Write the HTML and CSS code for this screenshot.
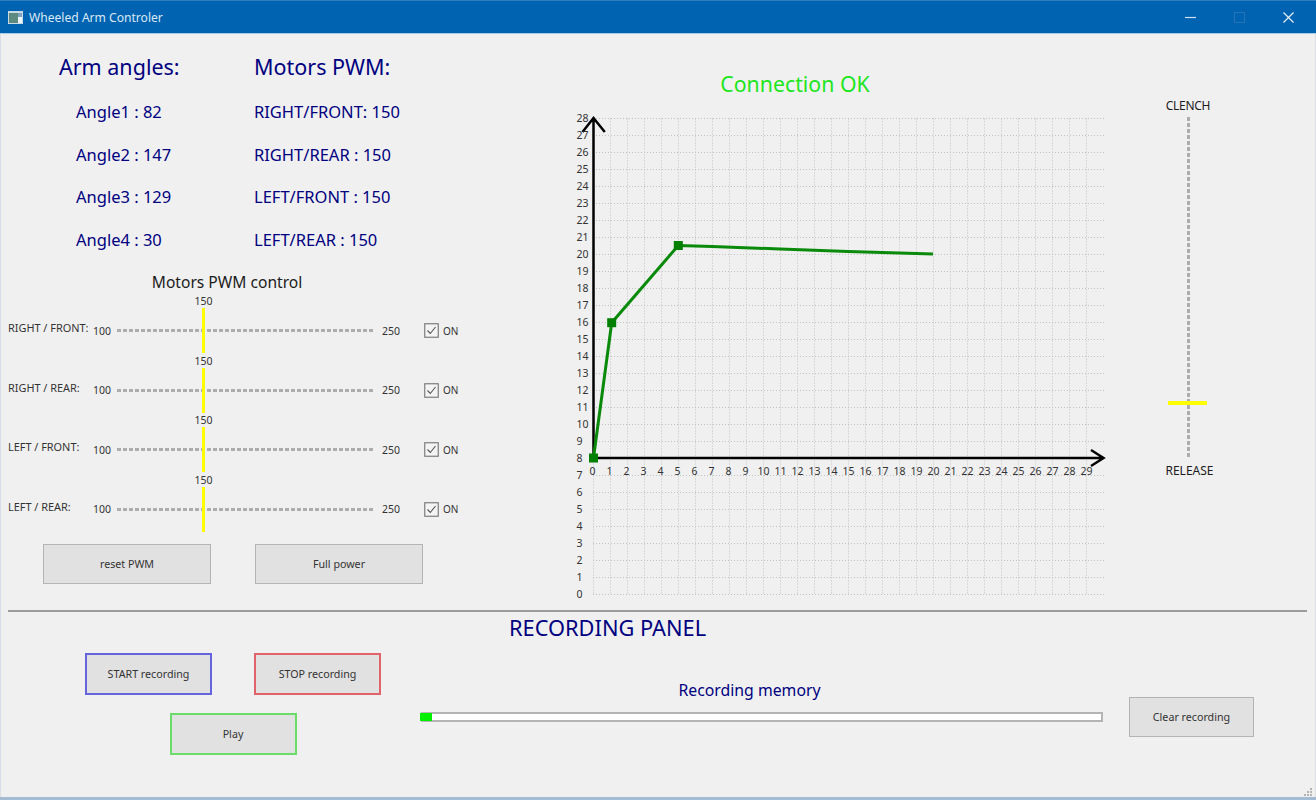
FILE: index.html
```html
<!DOCTYPE html>
<html lang="en">
<head>
<meta charset="utf-8">
<title>Wheeled Arm Controler</title>
<link rel="stylesheet" href="styles.css">
</head>
<body>
<div class="window">
  <header class="titlebar">
    <svg class="app-icon" width="15" height="13" viewBox="0 0 15 13"><rect width="15" height="13" fill="#c9d9e6"/><rect x="1" y="2" width="9" height="10" fill="#5c8a7f"/><rect x="10" y="2" width="4" height="4" fill="#7fa2bf"/><rect x="10" y="6" width="4" height="6" fill="#eef3f7"/></svg>
    <span class="title">Wheeled Arm Controler</span>
    <div class="win-controls">
      <svg width="11" height="11" viewBox="0 0 11 11"><path d="M0 5.500H11" stroke="#cfe2f3" stroke-width="1.200"/></svg>
      <svg class="win-max" width="11" height="11" viewBox="0 0 11 11"><rect x=".5" y=".5" width="10" height="10" fill="none" stroke="#2375b8"/></svg>
      <svg width="11" height="11" viewBox="0 0 11 11"><path d="M.5 .5L10.500 10.500M10.500 .5L.5 10.500" stroke="#e6f0f9" stroke-width="1.200"/></svg>
    </div>
  </header>

  <main class="top">
    <section class="left">
      <div class="readouts">
        <h2 class="heading">Arm angles:</h2>
        <h2 class="heading">Motors PWM:</h2>
        <div class="readout indent">Angle1 : 82</div>
        <div class="readout">RIGHT/FRONT: 150</div>
        <div class="readout indent">Angle2 : 147</div>
        <div class="readout">RIGHT/REAR : 150</div>
        <div class="readout indent">Angle3 : 129</div>
        <div class="readout">LEFT/FRONT : 150</div>
        <div class="readout indent">Angle4 : 30</div>
        <div class="readout">LEFT/REAR : 150</div>
      </div>
      <h3 class="control-title">Motors PWM control</h3>
      <div class="motor">
        <span class="motor-label">RIGHT / FRONT:</span><span class="val">100</span>
        <div class="h-slider"><span class="h-value">150</span><span class="h-handle"></span></div>
        <span class="val">250</span>
        <svg class="check" width="15" height="15" viewBox="0 0 15 15"><rect x=".75" y=".75" width="13.500" height="13.500" fill="#f4f4f4" stroke="#7d7d7d" stroke-width="1.200"/><path d="M3.500 7.500L6.300 10.500L11.500 4" fill="none" stroke="#555" stroke-width="1.100"/></svg>
        <span class="on">ON</span>
      </div>
      <div class="motor">
        <span class="motor-label">RIGHT / REAR:</span><span class="val">100</span>
        <div class="h-slider"><span class="h-value">150</span><span class="h-handle"></span></div>
        <span class="val">250</span>
        <svg class="check" width="15" height="15" viewBox="0 0 15 15"><rect x=".75" y=".75" width="13.500" height="13.500" fill="#f4f4f4" stroke="#7d7d7d" stroke-width="1.200"/><path d="M3.500 7.500L6.300 10.500L11.500 4" fill="none" stroke="#555" stroke-width="1.100"/></svg>
        <span class="on">ON</span>
      </div>
      <div class="motor">
        <span class="motor-label">LEFT / FRONT:</span><span class="val">100</span>
        <div class="h-slider"><span class="h-value">150</span><span class="h-handle"></span></div>
        <span class="val">250</span>
        <svg class="check" width="15" height="15" viewBox="0 0 15 15"><rect x=".75" y=".75" width="13.500" height="13.500" fill="#f4f4f4" stroke="#7d7d7d" stroke-width="1.200"/><path d="M3.500 7.500L6.300 10.500L11.500 4" fill="none" stroke="#555" stroke-width="1.100"/></svg>
        <span class="on">ON</span>
      </div>
      <div class="motor">
        <span class="motor-label">LEFT / REAR:</span><span class="val">100</span>
        <div class="h-slider"><span class="h-value">150</span><span class="h-handle"></span></div>
        <span class="val">250</span>
        <svg class="check" width="15" height="15" viewBox="0 0 15 15"><rect x=".75" y=".75" width="13.500" height="13.500" fill="#f4f4f4" stroke="#7d7d7d" stroke-width="1.200"/><path d="M3.500 7.500L6.300 10.500L11.500 4" fill="none" stroke="#555" stroke-width="1.100"/></svg>
        <span class="on">ON</span>
      </div>
      <div class="pwm-buttons">
        <button class="btn btn-wide">reset PWM</button>
        <button class="btn btn-wide">Full power</button>
      </div>
    </section>

    <section class="center">
      <div class="status">Connection OK</div>
      <svg class="chart" width="540" height="500" viewBox="570 105 540 500">
        <path class="grid-v" d="M593.500 118V594M610.500 118V594M627.500 118V594M644.500 118V594M661.500 118V594M678.500 118V594M695.500 118V594M712.500 118V594M729.500 118V594M746.500 118V594M763.500 118V594M780.500 118V594M797.500 118V594M814.500 118V594M831.500 118V594M848.500 118V594M865.500 118V594M882.500 118V594M899.500 118V594M916.500 118V594M933.500 118V594M950.500 118V594M967.500 118V594M984.500 118V594M1001.500 118V594M1018.500 118V594M1035.500 118V594M1052.500 118V594M1069.500 118V594M1086.500 118V594"/>
        <path class="grid-h" d="M593 118.500H1104M593 135.500H1104M593 152.500H1104M593 169.500H1104M593 186.500H1104M593 203.500H1104M593 220.500H1104M593 237.500H1104M593 254.500H1104M593 271.500H1104M593 288.500H1104M593 305.500H1104M593 322.500H1104M593 339.500H1104M593 356.500H1104M593 373.500H1104M593 390.500H1104M593 407.500H1104M593 424.500H1104M593 441.500H1104M593 475.500H1104M593 492.500H1104M593 509.500H1104M593 526.500H1104M593 543.500H1104M593 560.500H1104M593 577.500H1104M593 594.500H1104"/>
        <path class="axis" d="M593.500 458V118M582.500 132L593.500 118L604.800 132M593 458H1103M1091 450L1103.500 458L1091 466"/>
        <g class="ylabels">
          <text x="576.500" y="122">28</text><text x="576.500" y="139">27</text><text x="576.500" y="156">26</text><text x="576.500" y="173">25</text><text x="576.500" y="190">24</text><text x="576.500" y="207">23</text><text x="576.500" y="224">22</text><text x="576.500" y="241">21</text><text x="576.500" y="258">20</text><text x="576.500" y="275">19</text><text x="576.500" y="292">18</text><text x="576.500" y="309">17</text><text x="576.500" y="326">16</text><text x="576.500" y="343">15</text><text x="576.500" y="360">14</text><text x="576.500" y="377">13</text><text x="576.500" y="394">12</text><text x="576.500" y="411">11</text><text x="576.500" y="428">10</text><text x="576.500" y="445">9</text><text x="576.500" y="462">8</text><text x="576.500" y="479">7</text><text x="576.500" y="496">6</text><text x="576.500" y="513">5</text><text x="576.500" y="530">4</text><text x="576.500" y="547">3</text><text x="576.500" y="564">2</text><text x="576.500" y="581">1</text><text x="576.500" y="598">0</text>
        </g>
        <g class="xlabels">
          <text x="592.500" y="475">0</text><text x="609.500" y="475">1</text><text x="626.500" y="475">2</text><text x="643.500" y="475">3</text><text x="660.500" y="475">4</text><text x="677.500" y="475">5</text><text x="694.500" y="475">6</text><text x="711.500" y="475">7</text><text x="728.500" y="475">8</text><text x="745.500" y="475">9</text><text x="763.500" y="475">10</text><text x="780.500" y="475">11</text><text x="797.500" y="475">12</text><text x="814.500" y="475">13</text><text x="831.500" y="475">14</text><text x="848.500" y="475">15</text><text x="865.500" y="475">16</text><text x="882.500" y="475">17</text><text x="899.500" y="475">18</text><text x="916.500" y="475">19</text><text x="933.500" y="475">20</text><text x="950.500" y="475">21</text><text x="967.500" y="475">22</text><text x="984.500" y="475">23</text><text x="1001.500" y="475">24</text><text x="1018.500" y="475">25</text><text x="1035.500" y="475">26</text><text x="1052.500" y="475">27</text><text x="1069.500" y="475">28</text><text x="1086.500" y="475">29</text>
        </g>
        <path class="series" d="M593.500 458L611.700 322.700L678.300 245.500L712 246.400L780 249L848 251.500L933 254"/>
        <g class="markers">
          <rect x="589" y="453.500" width="9" height="9"/><rect x="607.200" y="318.200" width="9" height="9"/><rect x="673.800" y="241" width="9" height="9"/>
        </g>
      </svg>
    </section>

    <aside class="right">
      <span class="end-label">CLENCH</span>
      <div class="v-slider"><span class="v-handle"></span></div>
      <span class="end-label end-label-release">RELEASE</span>
    </aside>
  </main>

  <div class="rule"></div>

  <section class="recording">
    <h2 class="rec-title">RECORDING PANEL</h2>
    <div class="rec-row">
      <div class="rec-buttons">
        <button class="btn rec-btn rec-start">START recording</button>
        <button class="btn rec-btn rec-stop">STOP recording</button>
        <button class="btn rec-btn rec-play">Play</button>
      </div>
      <div class="memory">
        <div class="memory-label">Recording memory</div>
        <div class="progress"><span class="progress-fill" style="width:10px"></span></div>
      </div>
      <button class="btn clear">Clear recording</button>
    </div>
    <svg class="grip" width="10" height="10" viewBox="0 0 10 10"><path d="M7 1h2v2H7zM4 4h2v2H4zM7 4h2v2H7zM1 7h2v2H1zM4 7h2v2H4zM7 7h2v2H7z" fill="#b4b4b4"/></svg>
  </section>
</div>
</body>
</html>
```

FILE: styles.css
```css
* { box-sizing: border-box; }

html, body {
  margin: 0;
  padding: 0;
}

body {
  font-family: "Noto Sans", "Liberation Sans", sans-serif;
  background: #f0f0f0;
  overflow: hidden;
}

.window {
  position: relative;
  width: 1316px;
  height: 800px;
  display: flex;
  flex-direction: column;
  background: #f0f0f0;
  border-bottom: 3px solid #a3bbd3;
  box-shadow: inset 1px 0 0 #d9dfe5, inset -1px 0 0 #d9dfe5;
}

/* Title bar */
.titlebar {
  height: 34px;
  flex: none;
  display: flex;
  align-items: center;
  padding-left: 8px;
  background: #0063b1;
  border-top: 1px solid #2f7fbe;
  border-bottom: 1px solid #a9cbe6;
  color: #dbe8f4;
  font-size: 12.1px;
}

.app-icon { margin-right: 6px; }

.win-controls {
  margin-left: auto;
  margin-right: 22px;
  display: flex;
  gap: 38px;
}

/* Top area */
.top {
  height: 576px;
  flex: none;
  display: flex;
}

.left { width: 570px; flex: none; padding-top: 18px; }

.readouts {
  display: grid;
  grid-template-columns: 195px auto;
  grid-template-rows: 39px repeat(4, 42.5px);
  margin-left: 59px;
  color: #000080;
}

.heading {
  margin: 0;
  font-size: 21.500px;
  font-weight: 400;
  line-height: 30px;
}

.readout {
  font-size: 16.500px;
  line-height: 42.5px;
}

.indent { padding-left: 17px; }

.control-title {
  width: 454px;
  margin: 10px 0 8px;
  font-size: 15.600px;
  font-weight: 400;
  line-height: 22px;
  text-align: center;
  color: #1c1c1c;
}

/* Motor rows */
.motor {
  height: 59.5px;
  display: flex;
  align-items: center;
  padding-left: 8px;
  font-size: 10.5px;
  color: #333;
}

.motor-label {
  width: 85px;
  margin-bottom: 6px;
  font-size: 10.900px;
  white-space: nowrap;
}

.val { width: 17px; }

.h-slider {
  position: relative;
  width: 258px;
  height: 3px;
  margin: 0 7px;
  background: repeating-linear-gradient(90deg, #adadad 0 4px, transparent 4px 6px);
}

.h-handle {
  position: absolute;
  left: 85px;
  top: -21px;
  width: 3px;
  height: 45px;
  background: #ffff00;
}

.h-value {
  position: absolute;
  left: 77px;
  top: -35px;
  width: 19px;
  text-align: center;
  line-height: 14px;
}

.check { margin-left: 25px; margin-right: 4px; }

.on { font-size: 10px; }

.pwm-buttons {
  display: flex;
  gap: 44px;
  margin: 5px 0 0 43px;
}

.btn {
  font-family: inherit;
  font-size: 10.7px;
  color: #333;
  background: #e1e1e1;
  border: 1px solid #b4b4b4;
  padding: 0;
}

.btn-wide { width: 168px; height: 40px; }

/* Chart */
.center { width: 540px; flex: none; padding-top: 35px; }

.status {
  width: 450px;
  height: 30px;
  margin-bottom: 6px;
  font-size: 21.300px;
  line-height: 30px;
  text-align: center;
  color: #1ee61e;
}

.chart { display: block; }

.grid-v { fill: none; stroke: #d8d8d8; stroke-width: 1; stroke-dasharray: 2 1; }
.grid-h { fill: none; stroke: #c2c2c2; stroke-width: 1; stroke-dasharray: 1 2; }
.axis { fill: none; stroke: #000; stroke-width: 2.5; }
.series { fill: none; stroke: #0a8a0a; stroke-width: 3; }
.markers { fill: #007f00; }
.ylabels text, .xlabels text { font-size: 10.5px; fill: #333; }
.xlabels text { text-anchor: middle; }

/* Gripper slider */
.right {
  width: 156px;
  flex: none;
  padding-top: 64px;
  display: flex;
  flex-direction: column;
  align-items: center;
}

.end-label {
  font-size: 12px;
  line-height: 16px;
  letter-spacing: -0.3px;
  color: #1c1c1c;
}

.end-label-release {
  margin-left: 3px;
  letter-spacing: 0;
}

.v-slider {
  position: relative;
  width: 3px;
  height: 341px;
  margin: 3px 0 5px;
  background: repeating-linear-gradient(180deg, #adadad 0 4px, transparent 4px 6px);
}

.v-handle {
  position: absolute;
  left: -19px;
  top: 284px;
  width: 39px;
  height: 4px;
  background: #ffff00;
}

.rule {
  height: 2px;
  flex: none;
  margin: 0 9px 0 8px;
  background: #9c9c9c;
}

/* Recording panel */
.recording { flex: 1; }

.rec-title {
  margin: 0;
  padding-left: 509px;
  font-size: 21.800px;
  font-weight: 400;
  line-height: 32px;
  color: #000080;
}

.rec-row {
  display: flex;
  align-items: flex-start;
  margin-top: 9px;
  padding-left: 85px;
}

.rec-buttons {
  width: 296px;
  flex: none;
  display: grid;
  grid-template-columns: 127px 127px;
  justify-content: space-between;
  row-gap: 18px;
}

.rec-btn { height: 42px; border-width: 2px; }
.rec-start { border-color: #6464dc; }
.rec-stop { border-color: #e0636b; }
.rec-play { border-color: #69dc69; grid-column: 1 / 3; justify-self: center; width: 127px; }

.memory {
  width: 682px;
  flex: none;
  margin-left: 40px;
  padding-top: 26px;
}

.memory-label {
  font-size: 15.800px;
  line-height: 22px;
  text-align: center;
  padding-right: 25px;
  color: #000080;
  margin-bottom: 11px;
}

.progress {
  height: 10px;
  background: #fff;
  border: 2px solid #b4b4b4;
  border-left: 0;
}

.progress-fill {
  display: block;
  height: 100%;
  background: #00f000;
  box-shadow: 0 0 0 1px #00f000;
}

.clear { width: 125px; height: 40px; margin: 44px 0 0 26px; }

.grip {
  position: absolute;
  right: 3px;
  bottom: 0;
}
```
